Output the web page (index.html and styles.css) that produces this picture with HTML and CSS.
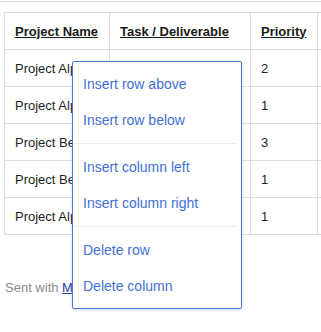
FILE: index.html
```html
<!DOCTYPE html>
<html>
<head>
<meta charset="utf-8">
<link rel="stylesheet" href="styles.css">
</head>
<body>
<div class="topline"></div>
<div class="content">
  <div class="tablewrap">
    <table class="grid">
      <colgroup>
        <col class="c1"><col class="c2"><col class="c3"><col class="c4">
      </colgroup>
      <thead>
        <tr><th>Project Name</th><th>Task / Deliverable</th><th>Priority</th><th></th></tr>
      </thead>
      <tbody>
        <tr><td>Project Alpha</td><td>Draft proposal</td><td>2</td><td></td></tr>
        <tr><td>Project Alpha</td><td>Review budget</td><td>1</td><td></td></tr>
        <tr><td>Project Beta</td><td>Design mockups</td><td>3</td><td></td></tr>
        <tr><td>Project Beta</td><td>Client meeting</td><td>1</td><td></td></tr>
        <tr><td>Project Alpha</td><td>Final report</td><td>1</td><td></td></tr>
      </tbody>
    </table>
  </div>
  <p class="sent">Sent with <a href="#">Mixmax</a></p>
</div>
<ul class="menu">
  <li class="item">Insert row above</li>
  <li class="item">Insert row below</li>
  <li class="sep"></li>
  <li class="item">Insert column left</li>
  <li class="item">Insert column right</li>
  <li class="sep"></li>
  <li class="item">Delete row</li>
  <li class="item">Delete column</li>
</ul>
</body>
</html>
```

FILE: styles.css
```css
html, body {
  margin: 0;
  padding: 0;
  background: #fff;
  overflow: hidden;
}
body {
  font-family: "Liberation Sans", Arial, sans-serif;
  color: #222;
  width: 321px;
  height: 332px;
  position: relative;
}
.topline {
  margin-top: 1px;
  height: 1px;
  background: #e0e0e0;
}
.content {
  padding: 10px 0 0 4px;
}
.tablewrap {
  overflow: hidden;
}
.grid {
  border-collapse: collapse;
  table-layout: fixed;
  width: 420px;
  font-size: 13px;
}
.c1 { width: 105px; }
.c2 { width: 141px; }
.c3 { width: 67px; }
.c4 { width: 107px; }
.grid th, .grid td {
  border: 1px solid #dcdde2;
  height: 37px;
  padding: 0 10px;
  text-align: left;
  vertical-align: middle;
  white-space: nowrap;
  overflow: hidden;
  box-sizing: border-box;
}
.grid th {
  font-weight: bold;
  text-decoration: underline;
  color: #1a1a1a;
}
.grid td {
  color: #1e1e1e;
}
.sent {
  margin: 45px 0 0 1px;
  font-size: 13px;
  color: #8a8a8a;
}
.sent a {
  color: #2b3d9e;
}
.menu {
  position: absolute;
  left: 72px;
  top: 61px;
  width: 168px;
  margin: 0;
  padding: 4px 0;
  list-style: none;
  background: #fff;
  border: 1px solid #4a7bd0;
  border-radius: 2px;
  box-shadow: 0 1px 3px rgba(60, 100, 200, 0.25);
  font-size: 14px;
}
.item {
  height: 36px;
  line-height: 36px;
  padding-left: 10px;
  color: #4170d4;
}
.sep {
  height: 1px;
  margin: 5px 4px 5px 0;
  background: #ececec;
}
```
